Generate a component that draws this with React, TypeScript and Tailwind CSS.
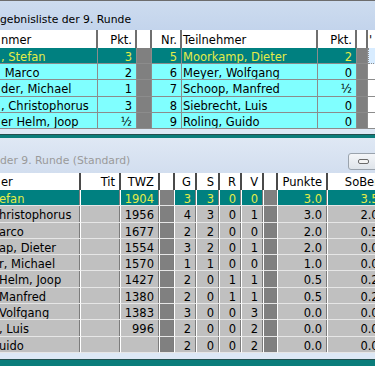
import React from "react";

type Col = { w: number; align?: "left" | "right"; gap?: boolean };

const topCols: Col[] = [
  { w: 98 },
  { w: 39, align: "right" },
  { w: 15, gap: true },
  { w: 30, align: "right" },
  { w: 136 },
  { w: 39, align: "right" },
  { w: 11, gap: true },
  { w: 30 },
];

const topHead = ["nmer", "Pkt.", "", "Nr.", "Teilnehmer", "Pkt.", "", "'"];

const topRows = [
  [", Stefan", "3", "", "5", "Moorkamp, Dieter", "2", "", ""],
  [" Marco", "2", "", "6", "Meyer, Wolfgang", "0", "", ""],
  ["der, Michael", "1", "", "7", "Schoop, Manfred", "½", "", ""],
  [", Christophorus", "3", "", "8", "Siebrecht, Luis", "0", "", ""],
  ["er Helm, Joop", "½", "", "9", "Roling, Guido", "0", "", ""],
];

const botCols: Col[] = [
  { w: 81 },
  { w: 40, align: "right" },
  { w: 39, align: "right" },
  { w: 15, gap: true },
  { w: 22, align: "right" },
  { w: 23, align: "right" },
  { w: 22, align: "right" },
  { w: 22, align: "right" },
  { w: 14, gap: true },
  { w: 50, align: "right" },
  { w: 64, align: "right" },
];

const botHead = ["er", "Tit", "TWZ", "", "G", "S", "R", "V", "", "Punkte", "SoBerg"];

const botRows = [
  ["efan", "", "1904", "", "3", "3", "0", "0", "", "3.0", "3.50"],
  ["hristophorus", "", "1956", "", "4", "3", "0", "1", "", "3.0", "2.00"],
  ["arco", "", "1677", "", "2", "2", "0", "0", "", "2.0", "0.50"],
  ["ap, Dieter", "", "1554", "", "3", "2", "0", "1", "", "2.0", "0.00"],
  ["r, Michael", "", "1570", "", "1", "1", "0", "0", "", "1.0", "0.00"],
  ["Helm, Joop", "", "1427", "", "2", "0", "1", "1", "", "0.5", "0.25"],
  ["Manfred", "", "1380", "", "2", "0", "1", "1", "", "0.5", "0.25"],
  ["Volfgang", "", "1383", "", "3", "0", "0", "3", "", "0.0", "0.00"],
  [", Luis", "", "996", "", "2", "0", "0", "2", "", "0.0", "0.00"],
  ["uido", "", "", "", "2", "0", "0", "2", "", "0.0", "0.00"],
];

function TopTable() {
  return (
    <div className="flex flex-col">
      <div className="flex h-[18px] bg-white">
        {topCols.map((c, i) => (
          <div
            key={i}
            style={{ width: c.w }}
            className={`shrink-0 overflow-hidden whitespace-nowrap border-r-2 border-[#6f6f6f] pt-[2px] leading-[16px] ${
              c.align === "right" ? "text-right pr-[3px]" : "pl-[1px]"
            }`}
          >
            {topHead[i]}
          </div>
        ))}
      </div>
      {topRows.map((r, ri) => (
        <div key={ri} className="flex h-[16.2px]">
          {topCols.map((c, i) => {
            const hi = ri === 0;
            let cls = "bg-[#80ffff] text-black";
            if (c.gap) cls = "bg-[#808080]";
            else if (i === 7) cls = hi ? "bg-[#d8ecff] border-l border-dotted border-[#2aa0c0]" : "bg-white";
            else if (hi) cls = "bg-[#008080] text-[#e4ec48]";
            return (
              <div
                key={i}
                style={{ width: c.w }}
                className={`shrink-0 overflow-hidden whitespace-pre border-r border-b border-[#8c8c8c] pt-[1px] leading-[16px] ${cls} ${
                  c.align === "right" ? "text-right pr-[4px]" : "pl-[1px]"
                }`}
              >
                {r[i]}
              </div>
            );
          })}
        </div>
      ))}
    </div>
  );
}

function BottomTable() {
  return (
    <div className="flex flex-col">
      <div className="flex h-[17px] bg-white">
        {botCols.map((c, i) => (
          <div
            key={i}
            style={{ width: c.w }}
            className={`shrink-0 overflow-hidden whitespace-nowrap border-r-2 border-[#4a4a4a] pt-[1px] leading-[16px] ${
              c.align === "right" ? "text-right pr-[4px]" : "pl-[1px]"
            }`}
          >
            {botHead[i]}
          </div>
        ))}
      </div>
      {botRows.map((r, ri) => (
        <div key={ri} className="flex h-[16.3px]">
          {botCols.map((c, i) => {
            const hi = ri === 0;
            let cls = "bg-[#c0c0c0] text-black";
            if (c.gap) cls = "bg-[#808080]";
            else if (hi) cls = "bg-[#008080] text-[#e4ec48]";
            return (
              <div
                key={i}
                style={{ width: c.w }}
                className={`shrink-0 overflow-hidden whitespace-pre border-r border-b border-r-white border-b-[#e6e6e6] shadow-[inset_-1px_0_0_#7c7c7c] pt-[1px] leading-[16px] ${cls} ${
                  c.align === "right" ? "text-right pr-[5px]" : "-indent-[1px]"
                }`}
              >
                {r[i]}
              </div>
            );
          })}
        </div>
      ))}
    </div>
  );
}

export default function App() {
  return (
    <div className="w-[375px] h-[366px] overflow-hidden bg-[#dbe6f3] font-['DejaVu_Sans',sans-serif] text-[11.5px] text-black">
      {/* oberes Fenster */}
      <div className="h-[1px] bg-[#6d6d6d]" />
      <div className="h-[29px] bg-gradient-to-b from-[#cddcef] to-[#c3d4ec] pt-[12px] text-[10.8px] leading-[14px]">
        gebnisliste der 9. Runde
      </div>
      <TopTable />
      <div className="h-[5px] bg-[#dde8f5]" />
      <div className="h-[1px] bg-[#25504f]" />
      <div className="h-[3px] bg-[#0b7d7b]" />
      {/* unteres Fenster */}
      <div className="flex h-[35px] items-center justify-between bg-gradient-to-b from-[#dfe8f4] to-[#d2deef]">
        <div className="pt-[11px] text-[10.8px] text-[#9a9a9a]">der 9. Runde (Standard)</div>
        <div className="mt-[12px] flex h-[17px] w-[30px] shrink-0 translate-x-[3px] items-center justify-center rounded-[3px] border border-[#9aa3ad] bg-gradient-to-b from-[#f4f6f9] to-[#dfe4ea]">
          <div className="h-[5px] w-[11px] rounded-[2px] border border-[#6a6a6a] bg-[#f4f4f4]" />
        </div>
      </div>
      <BottomTable />
      <div className="h-[6px] bg-[#dde8f5]" />
      <div className="h-[1px] bg-[#25504f]" />
      <div className="h-[10px] bg-[#0b7d7b]" />
    </div>
  );
}
